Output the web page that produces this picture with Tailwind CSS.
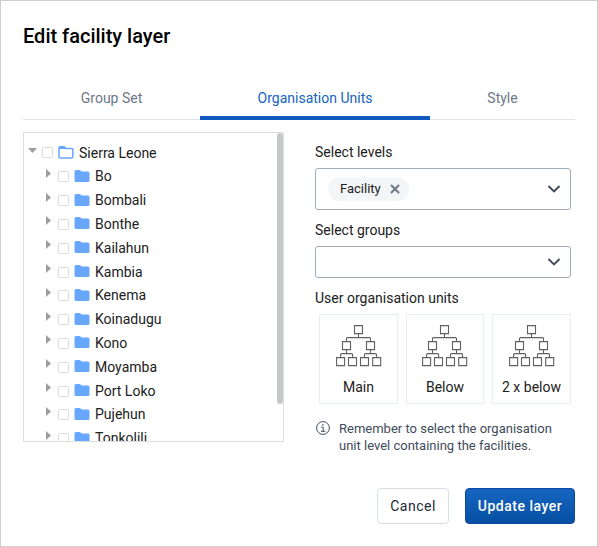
<!DOCTYPE html>
<html lang="en">
<head>
<meta charset="utf-8">
<title>Edit facility layer</title>
<script src="https://cdn.jsdelivr.net/npm/@tailwindcss/browser@4"></script>
</head>
<body class="font-[Roboto,sans-serif] text-[#212121]">
<svg class="hidden">
  <symbol id="org" viewBox="0 0 46 42">
    <g fill="none" stroke="#616161" stroke-width="1.1">
      <path d="M18.5.6h8v8h-8zM6.500 16.600h8v8h-8zM30.500 16.600h8v8h-8zM.6 32.600h8v8h-8zM12.500 32.600h8v8h-8zM24.500 32.600h8v8h-8zM36.700 32.600h8v8h-8z"/>
      <path d="M22.500 8.600v4M10.500 16.600v-3q0-1 1-1h22q1 0 1 1v3M10.500 24.600v4M4.600 32.600v-3q0-1 1-1h10q1 0 1 1v3M34.500 24.600v4M28.500 32.600v-3q0-1 1-1h10q1 0 1 1v3"/>
    </g>
  </symbol>
  <symbol id="chevron" viewBox="0 0 14 10">
    <path d="M1.500 2l5.500 5.400L12.500 2" fill="none" stroke="#404b5a" stroke-width="1.900"/>
  </symbol>
</svg>
<main class="flex h-[547px] w-[598px] flex-col border border-[#cfcfcf] bg-white px-[22px]">
  <h1 class="mt-[22px] h-[26px] text-[20px] leading-[26px] font-medium text-black">Edit facility layer</h1>
  <nav class="mt-[28px] flex h-[43px] w-[552px] border-b border-[#dde3ea] text-center text-[14px] leading-[43px] text-[#6c7787]">
    <div class="h-[43px] w-[177px]">Group Set</div>
    <div class="h-[43px] w-[230px] border-b-4 border-[#1059bf] text-[#1565c0]">Organisation Units</div>
    <div class="h-[43px] w-[145px]">Style</div>
  </nav>
  <div class="mt-[12px] flex">
    <section class="relative h-[310px] w-[261px] shrink-0 overflow-hidden border border-[#dedede]">
      <div class="mt-[8px] flex h-[24px] items-center pl-[4px]">
        <svg class="mb-[5px] h-[5px] w-[9px]" viewBox="0 0 9 5"><path d="M0 0h9L4.500 5z" fill="#9e9e9e"/></svg>
        <span class="mb-[2px] ml-[5px] size-[11px] rounded-[1px] border border-[#dedede]"></span>
        <svg class="mb-[1px] ml-[5px] h-[13px] w-[16px]" viewBox="0 0 16 13"><path d="M1 2q0-1.200 1.200-1.200h4l1.500 1.600h6q1.200 0 1.200 1.200v7.200q0 1.200-1.200 1.200H2.200Q1 12 1 10.800z" fill="none" stroke="#68a4f8" stroke-width="1.500"/><path d="M1 1h5.300l1.700 2H1z" fill="#68a4f8"/></svg>
        <span class="ml-[5px] text-[14px] leading-[24px]">Sierra Leone</span>
      </div>
      <div id="tree"></div>
      <div class="absolute top-0 right-0 h-[271px] w-[6px] rounded-full bg-[#c7c8ca]"></div>
    </section>
    <section class="ml-[31px] w-[256px] text-[14px]">
      <div class="mt-[11px] h-[18px] leading-[19px]">Select levels</div>
      <div class="mt-[7px] flex h-[42px] items-center justify-between rounded-[3px] border border-[#a0adba] pr-[9px] pl-[12px]">
        <span class="flex h-[24px] w-[81px] items-center rounded-full bg-[#f3f5f7] pl-[12px]"><span class="text-[13px] leading-[24px]">Facility</span>
          <svg class="ml-[9px] size-[10px]" viewBox="0 0 10 10"><path d="M1 1l8 8M9 1L1 9" stroke="#6c7787" stroke-width="2"/></svg></span>
        <svg class="h-[10px] w-[14px]"><use href="#chevron"/></svg>
      </div>
      <div class="mt-[11px] h-[18px] leading-[19px]">Select groups</div>
      <div class="mt-[7px] flex h-[32px] items-center justify-end rounded-[3px] border border-[#a0adba] pr-[9px]">
        <svg class="h-[10px] w-[14px]"><use href="#chevron"/></svg>
      </div>
      <div class="mt-[11px] h-[18px] leading-[19px]">User organisation units</div>
      <div class="mt-[7px] ml-[4px] flex gap-[8px]">
        <div class="flex h-[90px] w-[79px] flex-col items-center border border-[#e8edf2] pt-[10px]"><svg class="h-[42px] w-[46px]"><use href="#org"/></svg><span class="mt-[11px] leading-[19px]">Main</span></div>
        <div class="flex h-[90px] w-[78px] flex-col items-center border border-[#e8edf2] pt-[10px]"><svg class="h-[42px] w-[46px]"><use href="#org"/></svg><span class="mt-[11px] leading-[19px]">Below</span></div>
        <div class="flex h-[90px] w-[79px] flex-col items-center border border-[#e8edf2] pt-[10px]"><svg class="h-[42px] w-[46px]"><use href="#org"/></svg><span class="mt-[11px] leading-[19px]">2 x below</span></div>
      </div>
      <div class="mt-[16px] flex text-[#404b5a]">
        <svg class="mt-[1px] ml-[1px] size-[14px] shrink-0" viewBox="0 0 14 14" fill="none" stroke="#404b5a"><circle cx="7" cy="7" r="6.400"/><path d="M5.300 6.300H7.200v4M5 10.300h4.300"/><path d="M6.200 4h1.300" stroke-width="1.300"/></svg>
        <p class="ml-[9px] text-[13px] leading-[17px] whitespace-nowrap">Remember to select the organisation<br>unit level containing the facilities.</p>
      </div>
    </section>
  </div>
  <footer class="mt-auto mb-[22px] flex w-[552px] justify-end gap-[16px] text-[14px] leading-[34px] font-medium tracking-[0.5px]">
    <button class="h-[36px] w-[72px] rounded-[4px] border border-[#d5dde5] font-normal text-[#212934]">Cancel</button>
    <button class="h-[36px] w-[110px] rounded-[4px] border border-[#0d47a1] bg-linear-to-b from-[#1565c0] to-[#0650a3] text-white">Update layer</button>
  </footer>
</main>
<script>
  const units = ["Bo", "Bombali", "Bonthe", "Kailahun", "Kambia", "Kenema", "Koinadugu", "Kono", "Moyamba", "Port Loko", "Pujehun", "Tonkolili"];
  document.getElementById("tree").innerHTML = units.map(name => `
    <div class="flex h-[23.8px] items-center pl-[22px]">
      <svg class="mb-[7px] h-[9px] w-[5px]" viewBox="0 0 5 9"><path d="M0 0v9l5-4.500z" fill="#9e9e9e"/></svg>
      <span class="ml-[7px] size-[11px] rounded-[1px] border border-[#dedede]"></span>
      <svg class="mb-[2px] ml-[5px] h-[12px] w-[16px]" viewBox="0 0 16 12"><path d="M.5 1.500Q.5 0 2 0h4l1.600 1.600H14q1.500 0 1.500 1.500v7.400Q15.500 12 14 12H2Q.5 12 .5 10.500z" fill="#68a8fc"/></svg>
      <span class="ml-[5px] text-[14px] leading-[23px]">${name}</span>
    </div>`).join("");
</script>
</body>
</html>
